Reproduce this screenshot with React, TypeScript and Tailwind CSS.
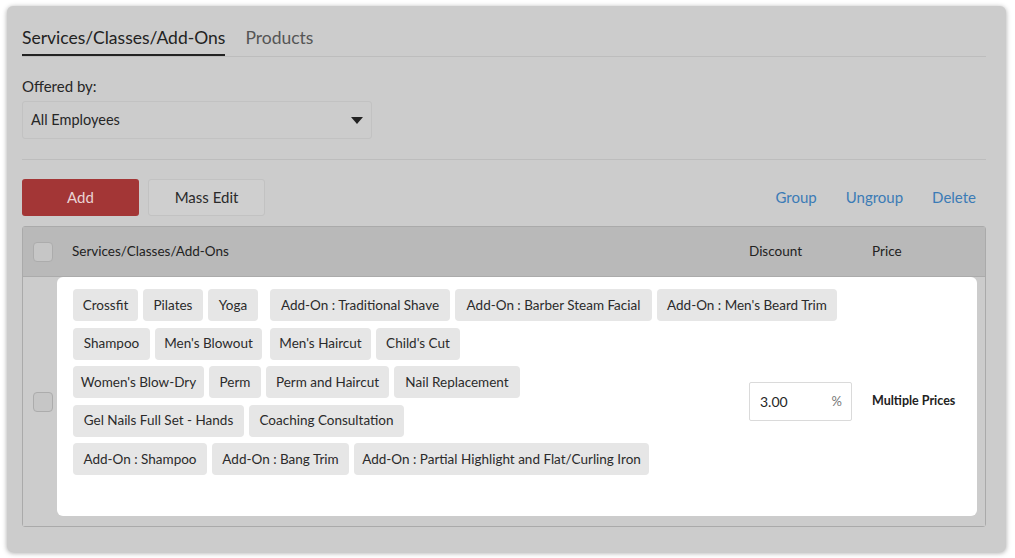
const TAG_ROWS: [string, string][][] = [
  [
    ['Crossfit', 'w-[65px]'],
    ['Pilates', 'w-[60px]'],
    ['Yoga', 'w-[50px]'],
    ['Add-On : Traditional Shave', 'w-[180px] ml-[7px]'],
    ['Add-On : Barber Steam Facial', 'w-[197px]'],
    ['Add-On : Men\'s Beard Trim', 'w-[180px]'],
  ],
  [
    ['Shampoo', 'w-[77px]'],
    ['Men\'s Blowout', 'w-[107px]'],
    ['Men\'s Haircut', 'w-[101px] ml-[3px]'],
    ['Child\'s Cut', 'w-[84px]'],
  ],
  [
    ['Women\'s Blow-Dry', 'w-[131px]'],
    ['Perm', 'w-[52px]'],
    ['Perm and Haircut', 'w-[123px]'],
    ['Nail Replacement', 'w-[126px]'],
  ],
  [
    ['Gel Nails Full Set - Hands', 'w-[171px]'],
    ['Coaching Consultation', 'w-[155px]'],
  ],
  [
    ['Add-On : Shampoo', 'w-[134px]'],
    ['Add-On : Bang Trim', 'w-[137px]'],
    ['Add-On : Partial Highlight and Flat/Curling Iron', 'w-[295px]'],
  ],
];

function Checkbox() {
  return <div className="h-[20px] w-[20px] rounded-[4px] border border-[#acacac] bg-[#c6c6c6]" />;
}

export default function App() {
  return (
    <div className="min-h-screen bg-white pl-[7px] pt-[6px] font-['Lato',sans-serif] text-[#262626]">
      <div className="h-[546px] w-[999px] rounded-[6px] bg-[#cccccc] pl-[15px] pr-[20px] pt-[20px] shadow-[0_1px_5px_rgba(0,0,0,0.35)]">
        <div className="flex gap-[20px] border-b border-[#bdbdbd]">
          <div className="border-b-2 border-[#222] pb-[4px] text-[17.5px] leading-[24px] text-[#222]">
            Services/Classes/Add-Ons
          </div>
          <div className="pb-[6px] text-[17.5px] leading-[24px] text-[#555]">Products</div>
        </div>

        <div className="mt-[19px] text-[15px] leading-[20px] text-[#262626]">Offered by:</div>
        <div className="mt-[5px] flex h-[38px] w-[350px] items-center justify-between rounded-[3px] border border-[#c2c2c2] pl-[8px] pr-[8px] text-[14.5px]">
          <span>All Employees</span>
          <span className="h-0 w-0 border-x-[6px] border-t-[7px] border-x-transparent border-t-[#222]" />
        </div>

        <div className="mt-[20px] h-px bg-[#bdbdbd]" />

        <div className="mt-[19px] flex items-center">
          <button className="h-[37px] w-[117px] rounded-[3px] bg-[#a33636] text-[15px] text-[#ead3d3]">Add</button>
          <button className="ml-[9px] h-[37px] w-[117px] rounded-[3px] border border-[#c2c2c2] bg-[#cfcfcf] text-[15px] text-[#2a2a2a]">
            Mass Edit
          </button>
          <div className="ml-auto flex gap-[29px] pr-[10px] text-[15px] text-[#3b7bb6]">
            <span>Group</span>
            <span>Ungroup</span>
            <span>Delete</span>
          </div>
        </div>

        <div className="mt-[10px] rounded-[3px] border border-[#aaaaaa]">
          <div className="grid h-[50px] grid-cols-[34px_692px_123px_1fr] items-center border-b border-[#ababab] bg-[#b9b9b9] text-[13.5px] text-[#222]">
            <div className="pl-[10px]">
              <Checkbox />
            </div>
            <div className="pl-[15px]">Services/Classes/Add-Ons</div>
            <div>Discount</div>
            <div>Price</div>
          </div>

          <div className="grid grid-cols-[34px_1fr] bg-[#cccccc]">
            <div className="self-center pl-[10px]">
              <Checkbox />
            </div>
            <div className="mb-[10px] mr-[8px] grid grid-cols-[692px_123px_1fr] rounded-[6px] bg-white">
              <div className="col-start-1 col-end-3 row-start-1 flex flex-col gap-[6.5px] pb-[41px] pl-[16px] pt-[12px]">
                {TAG_ROWS.map((row, r) => (
                  <div key={r} className="flex gap-[5px]">
                    {row.map(([label, cls]) => (
                      <div
                        key={label}
                        className={`flex h-[32px] items-center justify-center rounded-[4px] bg-[#e6e6e6] text-[13.5px] whitespace-nowrap text-[#2b2b2b] ${cls}`}
                      >
                        {label}
                      </div>
                    ))}
                  </div>
                ))}
              </div>
              <div className="col-start-2 row-start-1 self-center pt-[10px]">
                <div className="flex h-[39px] w-[103px] items-center justify-between rounded-[2px] border border-[#dadada] bg-white pl-[10px] pr-[9px] text-[14px]">
                  <span>3.00</span>
                  <span className="text-[13px] text-[#777]">%</span>
                </div>
              </div>
              <div className="col-start-3 row-start-1 self-center pt-[10px] text-[12.5px] font-bold text-[#222]">
                Multiple Prices
              </div>
            </div>
          </div>
        </div>
      </div>
    </div>
  );
}
